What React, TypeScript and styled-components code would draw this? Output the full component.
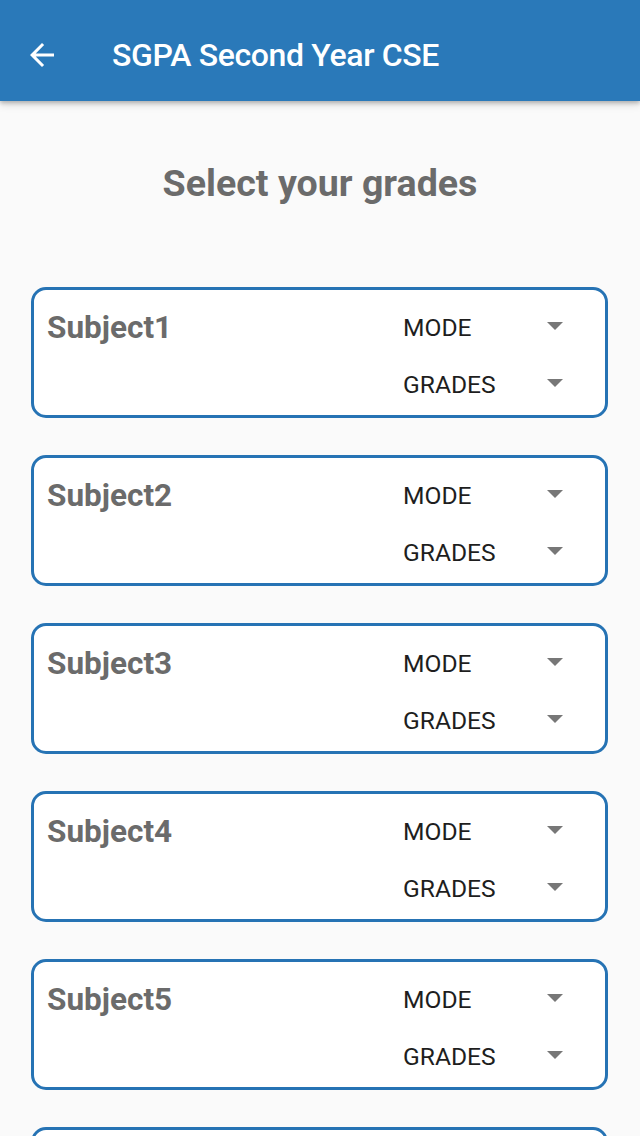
import React from "react";
import styled, { createGlobalStyle } from "styled-components";

const GlobalStyle = createGlobalStyle`
  html, body {
    margin: 0;
    padding: 0;
    background: #fafafa;
    font-family: Roboto, "Noto Sans", "Liberation Sans", sans-serif;
  }
  * { box-sizing: border-box; }
`;

const Page = styled.div`
  min-height: 1136px;
  background: #fafafa;
  overflow: hidden;
`;

const AppBar = styled.header`
  position: relative;
  z-index: 2;
  height: 101px;
  background: #2a79b9;
  display: flex;
  align-items: center;
  padding: 8px 0 0 24px;
  box-shadow: 0 2px 4px rgba(0, 0, 0, 0.22), 0 4px 8px rgba(0, 0, 0, 0.12);
`;

const BackIcon = styled.svg`
  width: 36px;
  height: 36px;
  fill: #ffffff;
  flex: none;
`;

const BarTitle = styled.h1`
  margin: 0 0 0 52px;
  color: #ffffff;
  font-size: 32px;
  font-weight: 500;
  letter-spacing: -0.35px;
  line-height: 40px;
`;

const Heading = styled.h2`
  margin: 60px 0 0;
  text-align: center;
  color: #6b6b6b;
  font-size: 37.6px;
  font-weight: 700;
  line-height: 44px;
`;

const CardList = styled.div`
  display: flex;
  flex-direction: column;
  gap: 37px;
  padding: 82px 32px 0 31px;
`;

const Card = styled.div`
  height: 131px;
  border: 3px solid #2673b4;
  border-radius: 15px;
  background: #ffffff;
  display: flex;
  padding: 9px 41px 2px 13px;
`;

const SubjectName = styled.div`
  flex: 1;
  margin-top: 9px;
  color: #6b6b6b;
  font-size: 31.5px;
  font-weight: 700;
  line-height: 40px;
`;

const Selects = styled.div`
  display: flex;
  flex-direction: column;
  width: 161px;
`;

const Select = styled.div`
  height: 57px;
  display: flex;
  align-items: center;
  justify-content: space-between;
  color: #1e1e1e;
  font-size: 24.6px;
  line-height: 57px;
`;

const Caret = styled.span`
  width: 0;
  height: 0;
  border-left: 8px solid transparent;
  border-right: 8px solid transparent;
  border-top: 8px solid #777777;
  margin: -4px 1px 0 0;
`;

const subjects = ["Subject1", "Subject2", "Subject3", "Subject4", "Subject5", "Subject6"];

export default function App() {
  return (
    <Page>
      <GlobalStyle />
      <AppBar>
        <BackIcon viewBox="0 0 24 24" aria-label="Back">
          <path d="M20 11H7.83l5.59-5.59L12 4l-8 8 8 8 1.41-1.41L7.83 13H20v-2z" />
        </BackIcon>
        <BarTitle>SGPA Second Year CSE</BarTitle>
      </AppBar>
      <Heading>Select your grades</Heading>
      <CardList>
        {subjects.map((s) => (
          <Card key={s}>
            <SubjectName>{s}</SubjectName>
            <Selects>
              <Select>
                MODE
                <Caret />
              </Select>
              <Select>
                GRADES
                <Caret />
              </Select>
            </Selects>
          </Card>
        ))}
      </CardList>
    </Page>
  );
}
